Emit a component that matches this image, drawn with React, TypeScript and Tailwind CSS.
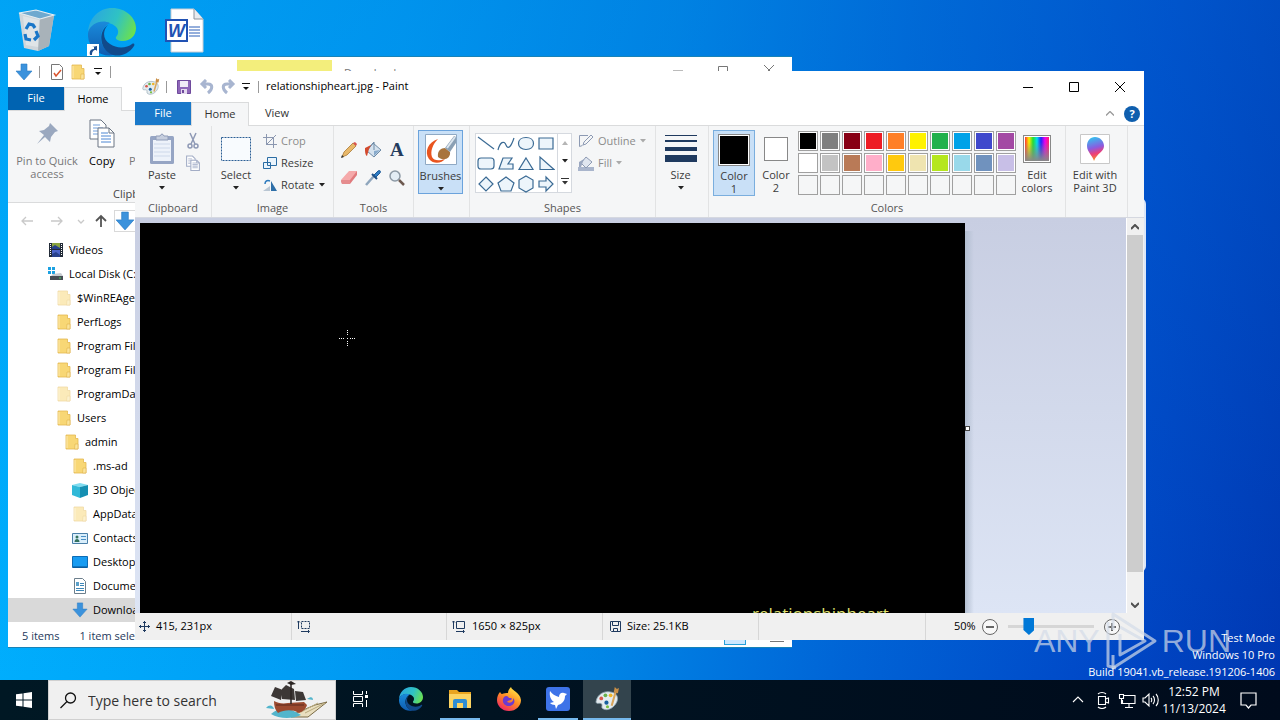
import type { ReactNode } from 'react';
import clsx from 'clsx';

/* ---------- small shared pieces ---------- */

const Caret = ({ color = '#222' }: { color?: string }) => (
    <svg width="6" height="4" viewBox="0 0 6 4" className="shrink-0">
        <path d="M0 0h6L3 3.5z" fill={color} />
    </svg>
);

const QuickMenu = () => (
    <svg width="8" height="8" viewBox="0 0 8 8">
        <path d="M0 .5h8" stroke="#111" />
        <path d="M1 4h6L4 7z" fill="#111" />
    </svg>
);

const DownArrow = ({ size = 18 }: { size?: number }) => (
    <svg width={size} height={size} viewBox="0 0 18 18" className="shrink-0">
        <path d="M6 1h6v7h5l-8 9-8-9h5z" fill="#3b92dc" stroke="#2b7cc4" strokeWidth=".6" />
    </svg>
);

const Folder = ({ faded }: { faded?: boolean }) => (
    <svg width="16" height="16" viewBox="0 0 16 16" opacity={faded ? 0.5 : 1}>
        <path d="M2 1h9.500v3.500H14V15H2z" fill="#f8d775" stroke="#e3b850" strokeWidth=".8" />
        <path d="M11 10h3v5h-3.500z" fill="#fbe49a" stroke="#e0b34a" strokeWidth=".6" />
        <path d="M3 2v12" stroke="#fdeab0" />
    </svg>
);

const Pages = ({ size, muted }: { size: number; muted?: boolean }) => (
    <svg width={size} height={size} viewBox="0 0 30 30" fill="#fff" stroke={muted ? '#a3adc6' : '#6a7583'} strokeWidth={muted ? 2 : 1}>
        <path d="M3 2h11l5 5v14H3z" />
        <path d="M6 7h7M6 10h10M6 13h10M6 16h9" stroke={muted ? '#c3cadc' : '#6f9ddb'} />
        <path d="M11 10h11l5 5v14H11z" />
        <path d="M22 10v5h5" fill="none" />
        <path d="M14 15h7M14 18h10M14 21h10M14 24h10" stroke={muted ? '#b5bed4' : '#4d86d2'} />
    </svg>
);

const Palette = ({ size }: { size: number }) => (
    <svg width={size} height={size} viewBox="0 0 24 24">
        <path d="M1 14C2 7 9 3 16 5c6 1 7 7 4 11-3 5-9 7-12 5-3-1 0-4-2-5s-5 1-5-2z" fill="#e4ebef" stroke="#8ea3ae" strokeWidth=".8" />
        <circle cx="6" cy="11" r="1.800" fill="#d6584a" />
        <circle cx="10" cy="8" r="1.800" fill="#68b14c" />
        <circle cx="15" cy="8" r="1.800" fill="#f0b429" />
        <circle cx="11" cy="15" r="2" fill="#18609e" />
        <circle cx="12" cy="19" r="1.500" fill="#7ac143" />
        <path d="M16 18 20 4" stroke="#d8a55c" strokeWidth="2" />
        <path d="M18 5 19 0l2 2 2-1-1 5z" fill="#c98f47" />
    </svg>
);

const EdgeLogo = ({ size }: { size: number }) => (
    <svg width={size} height={size} viewBox="0 0 48 48">
        <defs>
            <linearGradient id="edgeTop" x1="0" x2="1" y1=".3" y2=".6">
                <stop offset="0" stopColor="#2aa6e0" />
                <stop offset=".55" stopColor="#2fc2c4" />
                <stop offset="1" stopColor="#6be04f" />
            </linearGradient>
            <linearGradient id="edgeLow" x1="0" x2="0" y1="0" y2="1">
                <stop offset="0" stopColor="#1a8bdb" />
                <stop offset="1" stopColor="#0f5cb0" />
            </linearGradient>
        </defs>
        <path d="M0 24C1 10 11 0 24 0c14 0 24 10 24 20 0 8-6 13-13 13-5 0-8-2-7-4 3-3 3-8-1-11C18 11 4 14 0 24z" fill="url(#edgeTop)" />
        <path d="M0 25C2 15 14 11 22 15c-6 3-10 9-9 17 1 7 6 13 14 15C11 50-1 39 0 25z" fill="url(#edgeLow)" />
        <path d="M20 17c-6 6-5 15 2 19 7 5 17 4 22 0 2-1 3 0 2 2-5 8-14 11-21 9C12 43 9 24 20 17z" fill="#114a8b" />
    </svg>
);

/* ---------- desktop ---------- */

function DesktopIcons() {
    return (
        <div className="flex gap-[26px] pl-[13px] pt-2">
            <button aria-label="Recycle Bin" className="w-12 flex justify-center">
                <svg width="42" height="46" viewBox="0 0 42 46">
                    <path d="M3 5 38 7 33 38 22 43 8 40z" fill="#cfd6db" />
                    <path d="M24 11 38 7 33 38 22 43z" fill="#a8b2b9" />
                    <path d="M3 5 20 2l18 5-14 4z" fill="#6fa9cf" stroke="#e8eef2" strokeWidth="1.200" />
                    <path d="m7 8 16 4-1 27-12-2z" fill="#dfe4e7" />
                    <path d="m10 21 3-5 4 1 2 3M20 23l2 5-4 4M15 32l-5-1-1-5" fill="none" stroke="#1976c8" strokeWidth="3.200" />
                </svg>
            </button>
            <button aria-label="Microsoft Edge" className="w-[50px] relative flex justify-center">
                <EdgeLogo size={48} />
                <span className="absolute left-0 bottom-0 bg-white w-3 h-3">
                    <svg width="12" height="12" viewBox="0 0 12 12">
                        <path d="M3 11C2 7 4 5 7 5V3H5l5-1v5L9 6C6 6 5 8 5 11z" fill="#1d4f91" />
                    </svg>
                </span>
            </button>
            <button aria-label="Word document" className="w-11 flex justify-center">
                <svg width="40" height="46" viewBox="0 0 40 46">
                    <path d="M6 1h23l9 10v33H6z" fill="#fff" stroke="#c9cdd3" />
                    <path d="M29 1v10h9" fill="#e8ebef" stroke="#8b939c" />
                    <path d="M24 19h11M24 22h11M24 25h11M24 28h11" stroke="#2b5eb8" />
                    <path d="M1 12h21v21H1z" fill="#fff" stroke="#2152b3" strokeWidth="2" />
                    <text x="3" y="29" fontSize="18" fontWeight="700" fontStyle="italic" fontFamily="Liberation Sans" fill="#2152b3">W</text>
                </svg>
            </button>
        </div>
    );
}

/* ---------- file explorer ---------- */

const VideosIcon = () => (
    <svg width="16" height="16" viewBox="0 0 16 16">
        <path d="M1 1h14v14H1z" fill="#222b38" />
        <path d="M4 1h8v6H4z" fill="#8aa33f" />
        <path d="M4 8h8v7H4z" fill="#4a63c8" />
        <path d="m4 5 3-2 5 3v1H4zM4 12l4-2 4 3v2H4z" fill="#27408b" />
        <path d="M2.500 2v12M13.500 2v12" stroke="#fff" strokeDasharray="1 1" />
    </svg>
);
const DiskIcon = () => (
    <svg width="16" height="16" viewBox="0 0 16 16">
        <path d="M0 1h3v3H0zM4 1h3v3H4zM0 5h3v3H0zM4 5h3v3H4z" fill="#1ba1e2" />
        <path d="m5 8 8-1 2 3H3z" fill="#c6cbd0" />
        <path d="M2 10h13v4H2z" fill="#474d54" />
        <path d="M11 12h2" stroke="#46d35a" />
    </svg>
);
const CubeIcon = () => (
    <svg width="16" height="16" viewBox="0 0 16 16">
        <path d="m0 3 8-2 8 2-8 2z" fill="#7fdcf0" />
        <path d="m0 3 8 2v11l-8-3z" fill="#31b9d8" />
        <path d="m16 3-8 2v11l8-3z" fill="#158fb2" />
    </svg>
);
const ContactIcon = () => (
    <svg width="16" height="16" viewBox="0 0 16 16">
        <path d="M.5 3.500h15v10H.5z" fill="#d9eefb" stroke="#4a7fa8" />
        <circle cx="5" cy="7" r="1.500" fill="#33715e" />
        <path d="M2.500 12c0-4 5-4 5 0z" fill="#33715e" />
        <path d="M9 6.500h5M9 9.500h5" stroke="#4a8fc4" />
    </svg>
);
const DesktopIcon = () => (
    <svg width="16" height="16" viewBox="0 0 16 16">
        <path d="M.5 2.500h15v11H.5z" fill="#189cf2" stroke="#0d6cb5" />
        <path d="M1 13h14" stroke="#0a4f8a" />
    </svg>
);
const DocIcon = () => (
    <svg width="16" height="16" viewBox="0 0 16 16">
        <path d="M2.500.5h8l3 3v12h-11z" fill="#fff" stroke="#6c7f8c" />
        <path d="M8 5.500h4M8 7.500h4M4 10.500h8M4 12.500h8" stroke="#3d87b8" />
        <path d="M4 4h3v4H4z" fill="#5aa0c9" />
    </svg>
);

const tree: { name: string; pad: string; icon: ReactNode; selected?: boolean }[] = [
    { name: 'Videos', pad: 'pl-10', icon: <VideosIcon /> },
    { name: 'Local Disk (C:)', pad: 'pl-10', icon: <DiskIcon /> },
    { name: '$WinREAgent', pad: 'pl-12', icon: <Folder faded /> },
    { name: 'PerfLogs', pad: 'pl-12', icon: <Folder /> },
    { name: 'Program Files', pad: 'pl-12', icon: <Folder /> },
    { name: 'Program Files (x86)', pad: 'pl-12', icon: <Folder /> },
    { name: 'ProgramData', pad: 'pl-12', icon: <Folder faded /> },
    { name: 'Users', pad: 'pl-12', icon: <Folder /> },
    { name: 'admin', pad: 'pl-14', icon: <Folder /> },
    { name: '.ms-ad', pad: 'pl-16', icon: <Folder /> },
    { name: '3D Objects', pad: 'pl-16', icon: <CubeIcon /> },
    { name: 'AppData', pad: 'pl-16', icon: <Folder faded /> },
    { name: 'Contacts', pad: 'pl-16', icon: <ContactIcon /> },
    { name: 'Desktop', pad: 'pl-16', icon: <DesktopIcon /> },
    { name: 'Documents', pad: 'pl-16', icon: <DocIcon /> },
    { name: 'Downloads', pad: 'pl-16', icon: <DownArrow size={16} />, selected: true },
];

function Explorer() {
    return (
        <section
            aria-label="Downloads"
            className="absolute left-2 top-14 right-[488px] bottom-8 bg-white border-t border-b border-[#1883b7] flex flex-col overflow-hidden text-[11px]"
        >
            <header className="h-[30px] shrink-0 flex">
                <div className="flex items-center pl-[7px] w-[229px]">
                    <DownArrow />
                    <span className="w-px h-3 bg-[#999] ml-[6px]" />
                    <span className="flex items-center gap-[6px] pl-[10px] pr-2">
                        <svg width="14" height="16" viewBox="0 0 14 16">
                            <path d="M1.500.5h8l3 3v12h-11z" fill="#fff" stroke="#777" />
                            <path d="m4 9 2 3 5-6" fill="none" stroke="#d9532c" strokeWidth="1.500" />
                        </svg>
                        <Folder />
                    </span>
                    <QuickMenu />
                    <span className="w-px h-3 bg-[#999] ml-2" />
                </div>
                <div className="w-[95px] mt-[3px] pt-[7px] bg-[#f3ee7c] text-center leading-4">Manage</div>
                <div className="pl-3 pt-2 leading-4 text-[#777] grow">Downloads</div>
                <svg width="124" height="28" viewBox="0 0 124 28" fill="none" stroke="#777">
                    <path d="M5 14h10M50.500 9.500h9v9h-9zM96 8l10 10M106 8 96 18" />
                </svg>
            </header>
            <nav className="h-6 shrink-0 flex border-b border-[#dadbdc]">
                <button className="w-14 bg-[#0063b1] text-white">File</button>
                <button className="w-[58px] h-6 bg-[#f5f6f7] border-x border-t border-[#dadbdc]">Home</button>
            </nav>
            <div className="h-[92px] shrink-0 bg-[#f5f6f7] border-b border-[#dadbdc] flex flex-col">
                <div className="flex h-[76px] pt-[7px] leading-[13px]">
                    <button className="w-[78px] flex flex-col items-center text-[#777] gap-1">
                        <svg width="30" height="32" viewBox="0 0 30 32">
                            <path d="m18 5 8 8-3 1-4 5-1 5-5-5-8 7 7-9-5-4 5-1 5-4z" fill="#9aa8bf" />
                        </svg>
                        <span className="w-[70px]">Pin to Quick access</span>
                    </button>
                    <button className="w-8 flex flex-col items-center gap-1">
                        <span className="h-8"><Pages size={30} /></span>
                        Copy
                    </button>
                    <button className="w-[50px] pt-9 flex flex-col items-center text-[#777]">Paste</button>
                </div>
                <p className="pl-[105px] leading-[13px] text-[#444]">Clipboard</p>
            </div>
            <div className="h-[35px] shrink-0 flex items-center pl-3">
                <svg width="92" height="20" viewBox="0 0 92 20" fill="none" stroke="#c9c9c9" strokeWidth="1.300" className="shrink-0">
                    <path d="M2 10h11M6 6l-4 4 4 4M31 10h11M38 6l4 4-4 4M58 9l3 3 3-3" />
                    <path d="M81 16V5M76 10l5-5 5 5" stroke="#555" strokeWidth="1.800" />
                </svg>
                <span className="ml-[2px] grow border border-[#d9d9d9] h-[22px] flex items-center"><DownArrow size={20} /></span>
            </div>
            <ul className="grow min-h-0 overflow-hidden">
                {tree.map((item) => (
                    <li key={item.name}>
                        <button
                            className={clsx('h-6 w-full flex items-center gap-[5px] whitespace-nowrap', item.pad, item.selected && 'bg-[#d9d9d9]')}
                        >
                            {item.icon}
                            {item.name}
                        </button>
                    </li>
                ))}
            </ul>
            <footer className="h-[25px] shrink-0 flex items-center pt-[3px] pl-[14px] gap-5 text-[#1e395b]">
                <span>5 items</span>
                <span>1 item selected&nbsp; 25.1 KB</span>
                <span className="ml-auto mr-1 w-[22px] h-[18px] bg-[#cce8ff] border border-[#26a0da]" />
                <span className="mr-2 w-[14px] h-3 border-y border-[#777]" />
            </footer>
        </section>
    );
}

/* ---------- paint ribbon ---------- */

function Group({ label, className, children }: { label?: string; className: string; children: ReactNode }) {
    return (
        <section className={clsx('shrink-0 pt-1 border-r border-[#e2e3e4] flex flex-col', className)}>
            <div className="h-[70px] flex">{children}</div>
            <h2 className="h-4 leading-4 text-center text-[#555]">{label}</h2>
        </section>
    );
}

function BigButton({ label, icon, className, caret = true }: { label: string; icon: ReactNode; className: string; caret?: boolean }) {
    return (
        <button className={clsx('flex flex-col items-center leading-[13px]', className)}>
            <span className="h-[38px] flex items-center justify-center">{icon}</span>
            <span>{label}</span>
            {caret && <span className="pt-[5px]"><Caret /></span>}
        </button>
    );
}

function SmallButton({ label, icon, muted, caret }: { label: string; icon: ReactNode; muted?: boolean; caret?: boolean }) {
    return (
        <button className={clsx('h-[22px] flex items-center gap-1', muted && 'text-[#8b8b8b]')}>
            {icon}
            {label}
            {caret && <Caret color={muted ? '#aaa' : '#222'} />}
        </button>
    );
}

const shapes = [
    'M1 2 17 14',
    'M1 15C3 7 7 5 9 10s5 2 8-7',
    'M9 2.500c4.500 0 7.500 2.500 7.500 6s-3 6-7.500 6-7.500-2.500-7.500-6 3-6 7.500-6z',
    'M2 3h14v11H2z',
    'M4 3h10q3 0 3 3v5q0 3-3 3H4q-3 0-3-3V6q0-3 3-3z',
    'M2 14 6 3h9l-4 6h5v5z',
    'M9 3l7 11.500H2z',
    'M3 2v12.500h14z',
    'M9 2l7 7-7 7-7-7z',
    'M9 2l8 6-3 8H4L1 8z',
    'M9 1l7 4v8l-7 4-7-4V5z',
    'M2 6h7V2l7 7-7 7v-4H2z',
];

const tools: { name: string; icon: ReactNode }[] = [
    {
        name: 'Pencil',
        icon: (
            <>
                <path d="m2 16 2-5L13 2l3 3-9 9z" fill="#e8b86a" stroke="#a97a35" strokeWidth=".8" />
                <path d="m13 2 2-1 2 2-1 2z" fill="#d9534f" />
                <path d="m1 17 1-3 2 2z" fill="#333" />
            </>
        ),
    },
    {
        name: 'Fill with color',
        icon: (
            <>
                <path d="m9 2 8 7-7 7-7-6z" fill="#d5e2ee" stroke="#6f8ba6" />
                <path d="m6 6 4-5v8" fill="none" stroke="#6f8ba6" />
                <path d="m1 7 6-3-2 4-2 7C1 14 1 10 1 7z" fill="#d34a2d" />
                <path d="m10 10 6-1-6 6z" fill="#88aacb" />
            </>
        ),
    },
    {
        name: 'Text',
        icon: <text x="2" y="15" fontSize="19" fontWeight="700" fontFamily="Liberation Serif" fill="#243c5e">A</text>,
    },
    {
        name: 'Eraser',
        icon: (
            <>
                <path d="m1 12 8-9 8-1v4l-7 9H2z" fill="#e07a7d" />
                <path d="m1 11 8-9h8l-7 9z" fill="#f5a9aa" />
                <path d="M1 11h9v4H2z" fill="#e58c8e" />
            </>
        ),
    },
    {
        name: 'Color picker',
        icon: (
            <>
                <path d="m2 16 8-9" stroke="#8fa6bd" strokeWidth="2.500" />
                <path d="m8 5 5 5" stroke="#1d4f86" strokeWidth="2" />
                <path d="m10 6 4-4c2-1 3 0 2 2l-4 4z" fill="#2f7cc4" stroke="#1d5a97" />
            </>
        ),
    },
    {
        name: 'Magnifier',
        icon: (
            <>
                <circle cx="7" cy="7" r="5" fill="#e3edf5" stroke="#8c99a5" strokeWidth="1.500" />
                <path d="m11 11 5 5" stroke="#6d5a50" strokeWidth="2.500" />
            </>
        ),
    },
];

const palette = [
    '#000000', '#7f7f7f', '#880015', '#ed1c24', '#ff7f27', '#fff200', '#22b14c', '#00a2e8', '#3f48cc', '#a349a4',
    '#ffffff', '#c3c3c3', '#b97a57', '#ffaec9', '#ffc90e', '#efe4b0', '#b5e61d', '#99d9ea', '#7092be', '#c8bfe7',
    '', '', '', '', '', '', '', '', '', '',
];

function Ribbon() {
    return (
        <div className="h-[92px] shrink-0 flex bg-[#f5f6f7] border-b border-[#d5d8e0] text-[#3b3b3b]">
            <Group label="Clipboard" className="w-[77px]">
                <BigButton
                    label="Paste"
                    className="w-[46px] ml-1"
                    icon={
                        <svg width="26" height="32" viewBox="0 0 26 32">
                            <rect x="1" y="3" width="24" height="28" rx="1.500" fill="#96a5c4" />
                            <path d="M4 7h18v21H4z" fill="#edf2fa" />
                            <path d="M5 11h16M5 15h16M5 19h16M5 23h16" stroke="#cdd8ea" />
                            <path d="M7 3h4q2-4 4 0h4v4H7z" fill="#c6cede" stroke="#8f9cb8" />
                        </svg>
                    }
                />
                <div className="flex flex-col">
                    <button aria-label="Cut" className="h-[22px] w-4">
                        <svg width="16" height="18" viewBox="0 0 16 18" fill="none" stroke="#8e99b5" strokeWidth="1.500">
                            <path d="m5 1 5 11M11 1 6 12" />
                            <circle cx="5" cy="14" r="2" />
                            <circle cx="11" cy="14" r="2" />
                        </svg>
                    </button>
                    <button aria-label="Copy" className="h-[22px] w-4"><Pages size={16} muted /></button>
                </div>
            </Group>
            <Group label="Image" className="w-[122px]">
                <BigButton
                    label="Select"
                    className="w-12"
                    icon={
                        <svg width="32" height="26" viewBox="0 0 32 26">
                            <path d="M1.500 1.500h29v23h-29z" fill="#f8fbfe" stroke="#2b5f94" strokeDasharray="2 1" />
                        </svg>
                    }
                />
                <div className="flex flex-col pl-[3px]">
                    <SmallButton
                        muted
                        label="Crop"
                        icon={
                            <svg width="14" height="14" viewBox="0 0 14 14" fill="none" stroke="#8b97b0">
                                <path d="M3.500 0v10.500H14M0 3.500h10.500V14M3 11l10-10" />
                            </svg>
                        }
                    />
                    <SmallButton
                        label="Resize"
                        icon={
                            <svg width="14" height="14" viewBox="0 0 14 14" fill="#eaf4fc" stroke="#2b6ca3">
                                <path d="M.5 6.500h7v6h-7zM4.500 1.500h9v8h-9z" />
                            </svg>
                        }
                    />
                    <SmallButton
                        caret
                        label="Rotate"
                        icon={
                            <svg width="14" height="14" viewBox="0 0 14 14">
                                <path d="M0 13h7V8z" fill="#b9c6d3" />
                                <path d="M8 3v10h6z" fill="#2e6fa8" />
                                <path d="M2 6c0-3 2-4 5-3" fill="none" stroke="#2b79bd" strokeWidth="1.500" />
                            </svg>
                        }
                    />
                </div>
            </Group>
            <Group label="Tools" className="w-20">
                <div className="grid grid-cols-[repeat(3,24px)] auto-rows-[28px] pt-[6px] pl-[3px] content-start">
                    {tools.map((tool) => (
                        <button key={tool.name} aria-label={tool.name} className="flex items-center justify-center">
                            <svg width="18" height="18" viewBox="0 0 18 18">{tool.icon}</svg>
                        </button>
                    ))}
                </div>
            </Group>
            <Group className="w-14">
                <BigButton
                    label="Brushes"
                    className="w-[45px] h-16 ml-1 bg-[#c9e0f7] border border-[#6ba3dc]"
                    icon={
                        <svg width="34" height="34" viewBox="0 0 34 34">
                            <path d="M1.500 1.500h31v30h-31z" fill="#fff" stroke="#8fa9c4" />
                            <path d="M14 6C4 9 0 19 5 26c5 6 13 4 16 0-6 2-11 2-13-2-2-6 1-13 6-18z" fill="#e9541f" />
                            <path d="M14 24c-1-6 3-9 7-9l5 4c1 6-6 10-12 5z" fill="#a8743d" />
                            <path d="m21 15 9-12 2 1v6l-6 9z" fill="#8aa0b5" />
                            <path d="m23 15 8-11" stroke="#dce6ef" strokeWidth="2" />
                        </svg>
                    }
                />
            </Group>
            <Group label="Shapes" className="w-[186px]">
                <div className="ml-[5px] mt-[3px] h-[60px] w-[97px] flex border border-[#d5d9df] bg-white">
                    <div className="grid grid-cols-[repeat(4,20px)] auto-rows-[20px] w-[81px]">
                        {shapes.map((d) => (
                            <button key={d} aria-label="Shape" className="flex items-center justify-center">
                                <svg width="18" height="18" viewBox="0 0 18 18">
                                    <path d={d} fill={d === shapes[0] || d === shapes[1] ? 'none' : '#edf5fb'} stroke="#3a6a94" strokeWidth="1.200" />
                                </svg>
                            </button>
                        ))}
                    </div>
                    <div className="w-[14px] border-l border-[#d5d9df] flex flex-col items-center justify-around">
                        <svg width="6" height="4" viewBox="0 0 6 4"><path d="M0 4h6L3 0z" fill="#b5b5b5" /></svg>
                        <Caret />
                        <svg width="8" height="7" viewBox="0 0 8 7"><path d="M0 .5h8" stroke="#333" /><path d="M1 3h6L4 6.500z" fill="#333" /></svg>
                    </div>
                </div>
                <div className="flex flex-col pl-[6px]">
                    <SmallButton
                        muted
                        caret
                        label="Outline"
                        icon={
                            <svg width="16" height="16" viewBox="0 0 16 16" fill="none" stroke="#8d9ab3">
                                <path d="M10 2.500H1.500v11l3-1M5 12l1-3 7-7 2 2-7 7z" />
                            </svg>
                        }
                    />
                    <SmallButton
                        muted
                        caret
                        label="Fill"
                        icon={
                            <svg width="16" height="16" viewBox="0 0 16 16">
                                <path d="M0 12h16v4H0z" fill="#a9b5cc" />
                                <path d="m8 2 6 5-6 6-5-5z" fill="#dfe5ef" stroke="#8d9ab3" />
                                <path d="m1 7 5-3-3 8H1z" fill="#9aa7c0" />
                            </svg>
                        }
                    />
                </div>
            </Group>
            <Group className="w-[53px]">
                <BigButton
                    label="Size"
                    className="w-[49px]"
                    icon={
                        <svg width="32" height="28" viewBox="0 0 32 28" fill="#1f3a5f">
                            <path d="M0 0h32v1H0zM0 5h32v2H0zM0 12h32v4H0zM0 20h32v7H0z" />
                        </svg>
                    }
                />
            </Group>
            <Group label="Colors" className="w-[357px]">
                <BigButton
                    caret={false}
                    label="Color 1"
                    className="w-[42px] h-[66px] ml-1 px-1 bg-[#c9e0f7] border border-[#7aaede]"
                    icon={<span className="w-8 h-8 border border-[#888] bg-white p-px flex"><span className="grow bg-black" /></span>}
                />
                <BigButton
                    caret={false}
                    label="Color 2"
                    className="w-[42px] px-1"
                    icon={<span className="w-6 h-6 bg-white border border-[#888]" />}
                />
                <div className="pt-px pl-px">
                    <div className="grid grid-cols-[repeat(10,20px)] auto-rows-[20px] gap-[2px]">
                        {palette.map((color, i) => (
                            <button
                                key={i}
                                aria-label={color || 'Empty color'}
                                className={clsx('border border-[#a0a0a0] p-px flex', color ? 'bg-white' : 'bg-[#f5f6f7]')}
                            >
                                <span className="grow h-full" style={{ backgroundColor: color || undefined }} />
                            </button>
                        ))}
                    </div>
                </div>
                <BigButton
                    caret={false}
                    label="Edit colors"
                    className="w-[42px] px-1"
                    icon={
                        <span className="w-7 h-7 border border-[#888] p-px bg-white flex">
                            <span className="grow bg-[linear-gradient(to_top,#888_0%,transparent_80%),linear-gradient(to_right,#f33,#fe0,#2d3,#0de,#22f,#e0e,#f26)]" />
                        </span>
                    }
                />
            </Group>
            <Group className="w-[62px]">
                <BigButton
                    caret={false}
                    label="Edit with Paint 3D"
                    className="w-[58px]"
                    icon={
                        <svg width="30" height="30" viewBox="0 0 30 30">
                            <defs>
                                <linearGradient id="pin3d" x1=".3" x2=".5" y1="0" y2="1">
                                    <stop offset="0" stopColor="#31c4f0" />
                                    <stop offset=".45" stopColor="#8a5ce0" />
                                    <stop offset=".7" stopColor="#ee3e77" />
                                    <stop offset="1" stopColor="#f79a1f" />
                                </linearGradient>
                            </defs>
                            <path d="M.5.5h29v29H.5z" fill="#fff" stroke="#c8c8c8" />
                            <path d="M15 3c5 0 9 4 9 9 0 6-7 7-10 15-1-5-7-9-7-15 0-5 3-9 8-9z" fill="url(#pin3d)" />
                        </svg>
                    }
                />
            </Group>
        </div>
    );
}

/* ---------- paint window ---------- */

function Paint() {
    return (
        <section
            aria-label="relationshipheart.jpg - Paint"
            className="absolute left-[135px] right-[136px] top-[71px] bottom-10 bg-white flex flex-col overflow-hidden text-[11px]"
        >
            <header className="h-[31px] shrink-0 flex items-center pl-[7px]">
                <Palette size={18} />
                <span className="w-px h-3 bg-[#999] ml-[6px]" />
                <svg width="14" height="14" viewBox="0 0 14 14" className="ml-[10px]">
                    <path d="M.5.5h13v13H.5z" fill="#8e66b8" stroke="#6f4a9c" />
                    <path d="M3 1h8v6H3z" fill="#f0eaf6" />
                    <path d="M4 9h6v5H4z" fill="#e3d9ee" />
                    <path d="M5 10h2v3H5z" fill="#6f4a9c" />
                </svg>
                <svg width="38" height="16" viewBox="0 0 38 16" fill="none" stroke="#a8b5d0" strokeWidth="3" className="ml-2">
                    <path d="M4 5h5c5 0 5 5 0 9M7 1 3 5l4 4M33 5h-5c-5 0-5 5 0 9M30 1l4 4-4 4" />
                </svg>
                <span className="pl-[5px]"><QuickMenu /></span>
                <span className="w-px h-3 bg-[#999] ml-2" />
                <h1 className="pl-[7px] text-black grow">relationshipheart.jpg - Paint</h1>
                <button aria-label="Minimize" className="w-[46px] flex justify-center">
                    <svg width="10" height="10" viewBox="0 0 10 10"><path d="M0 5.500h10" stroke="#000" /></svg>
                </button>
                <button aria-label="Maximize" className="w-[46px] flex justify-center">
                    <svg width="10" height="10" viewBox="0 0 10 10"><path d="M.5.5h9v9h-9z" fill="none" stroke="#000" /></svg>
                </button>
                <button aria-label="Close" className="w-[46px] flex justify-center mr-px">
                    <svg width="10" height="10" viewBox="0 0 10 10"><path d="m0 0 10 10M10 0 0 10" stroke="#000" /></svg>
                </button>
            </header>
            <nav className="h-6 shrink-0 flex items-stretch border-b border-[#dadbdc] text-[#333]">
                <button className="w-14 bg-[#1979ca] text-white">File</button>
                <button className="w-[58px] h-6 bg-[#f5f6f7] border-x border-t border-[#dadbdc]">Home</button>
                <button className="w-14">View</button>
                <button aria-label="Collapse ribbon" className="ml-auto w-4 flex items-center justify-center">
                    <svg width="8" height="5" viewBox="0 0 8 5"><path d="m0 4.500 4-4 4 4" fill="none" stroke="#999" strokeWidth="1.300" /></svg>
                </button>
                <button aria-label="Help" className="self-center ml-[6px] mr-1 w-4 h-4 rounded-full bg-[#0f5fae] text-white font-bold leading-4">?</button>
            </nav>
            <Ribbon />
            <div className="grow min-h-0 flex bg-linear-to-b from-[#c8cee2] to-[#dde5f5]">
                <div className="grow min-w-0 flex pl-[5px] pt-[5px] overflow-hidden">
                    <div className="relative w-[825px] shrink-0 bg-black overflow-hidden">
                        <svg width="17" height="17" viewBox="0 0 17 17" className="absolute left-[199px] top-[107px]" stroke="#fff">
                            <path d="M8.500 0v6M8.500 11v6M0 8.500h6M11 8.500h6" strokeDasharray="1 1" />
                            <path d="M8 8.500h1" />
                        </svg>
                        <p className="absolute left-[612px] -bottom-[13px] text-[17px] leading-6 text-[#dfe070] whitespace-nowrap">relationshipheart</p>
                    </div>
                    <div className="relative w-[9px] mt-2 bg-linear-to-r from-[#b3bfd1] to-transparent">
                        <span className="absolute left-0 top-[51%] w-[5px] h-[5px] bg-white border border-[#444]" />
                    </div>
                </div>
                <div className="w-[18px] shrink-0 bg-[#f0f0f0] border-l border-white flex flex-col pr-px">
                    <button aria-label="Scroll up" className="h-[17px] flex items-center justify-center">
                        <svg width="8" height="6" viewBox="0 0 8 6"><path d="m0 5 4-4 4 4" fill="none" stroke="#505050" strokeWidth="2" /></svg>
                    </button>
                    <span className="flex-[14] bg-[#cdcdcd]" />
                    <span className="flex-1" />
                    <button aria-label="Scroll down" className="h-[17px] flex items-center justify-center">
                        <svg width="8" height="6" viewBox="0 0 8 6"><path d="m0 1 4 4 4-4" fill="none" stroke="#505050" strokeWidth="2" /></svg>
                    </button>
                </div>
            </div>
            <footer className="h-[27px] shrink-0 flex items-center bg-[#f0f0f0] text-black [&>div]:h-full [&>div]:flex [&>div]:items-center [&>div]:gap-[6px]">
                <div className="w-[157px] pl-1 border-r border-[#d7d7d7]">
                    <svg width="11" height="11" viewBox="0 0 11 11" fill="none" stroke="#1f3a5f"><path d="M5.500 0v11M0 5.500h11M4 2l1.500-1.500L7 2M4 9l1.500 1.500L7 9M2 4 .5 5.500 2 7M9 4l1.500 1.500L9 7" /></svg>
                    415, 231px
                </div>
                <div className="w-[155px] pl-[5px] border-r border-[#d7d7d7]">
                    <svg width="14" height="13" viewBox="0 0 14 13" fill="none" stroke="#1f3a5f"><path d="M4.500 1.500h8v7h-8z" strokeDasharray="2 1" /><path d="M1.500 9V1M0 2.500 1.500 1 3 2.500M4 11.500h8M11 10l1.500 1.500L11 13" /></svg>
                </div>
                <div className="w-[156px] pl-[5px] border-r border-[#d7d7d7]">
                    <svg width="14" height="13" viewBox="0 0 14 13" fill="none" stroke="#1f3a5f"><path d="M4.500 1.500h8v7h-8zM1.500 9V1M0 2.500 1.500 1 3 2.500M4 11.500h8M11 10l1.500 1.500L11 13" /></svg>
                    1650 × 825px
                </div>
                <div className="w-[156px] pl-[7px] border-r border-[#d7d7d7]">
                    <svg width="11" height="11" viewBox="0 0 11 11" fill="none" stroke="#1f3a5f"><path d="M.5.5h10v10H1.500l-1-1zM2.500.5v4h6v-4M3.500 10V7.500h4V10" /></svg>
                    Size: 25.1KB
                </div>
                <div className="grow" />
                <div className="w-[219px] pl-7 border-l border-[#d7d7d7]">
                    <span>50%</span>
                    <button aria-label="Zoom out">
                        <svg width="16" height="16" viewBox="0 0 16 16" fill="#f8f8f8" stroke="#666"><circle cx="8" cy="8" r="7.500" /><path d="M4 8h8" strokeWidth="2" /></svg>
                    </button>
                    <input
                        type="range"
                        aria-label="Zoom"
                        defaultValue={21}
                        className="appearance-none w-[86px] h-[3px] mx-1 bg-[#d6d6d6] [&::-webkit-slider-thumb]:appearance-none [&::-webkit-slider-thumb]:w-[11px] [&::-webkit-slider-thumb]:h-[17px] [&::-webkit-slider-thumb]:bg-[#0078d7] [&::-webkit-slider-thumb]:[clip-path:polygon(0_0,100%_0,100%_70%,50%_100%,0_70%)]"
                    />
                    <button aria-label="Zoom in">
                        <svg width="16" height="16" viewBox="0 0 16 16" fill="#f8f8f8" stroke="#666"><circle cx="8" cy="8" r="7.500" /><path d="M4 8h8M8 4v8" strokeWidth="2" /></svg>
                    </button>
                </div>
            </footer>
        </section>
    );
}

function Watermark() {
    return (
        <div className="absolute right-[49px] bottom-2 h-[62px] flex items-center text-[#d3dbe8]/70 font-['Liberation_Sans',sans-serif] text-[32px] leading-10">
            <span>ANY</span>
            <svg width="62" height="62" viewBox="0 0 62 62" fill="none" stroke="#d3dbe8" strokeOpacity=".7" strokeWidth="3" strokeLinejoin="round">
                <path d="M13 20V4l42 27-42 27V45" />
                <path d="M8 12v44l8 2M20 24v21l25-14-25-14" />
            </svg>
            <span>RUN</span>
        </div>
    );
}

/* ---------- taskbar ---------- */

function TaskButton({ name, className, children }: { name: string; className?: string; children: ReactNode }) {
    return (
        <button aria-label={name} className="w-12 h-full flex items-center justify-center">
            <span className={clsx('h-full flex items-center justify-center border-b-2', className ?? 'w-10 border-transparent')}>{children}</span>
        </button>
    );
}

function Taskbar() {
    return (
        <footer className="h-10 shrink-0 bg-[#00121d] bg-linear-to-r from-[#001824] to-[#000b1c] flex items-center text-white">
            <button aria-label="Start" className="w-12 h-full flex items-center justify-center">
                <svg width="16" height="16" viewBox="0 0 16 16" fill="#fff"><path d="M0 2.300 6.500 1.400v6.100H0zM7.500 1.200 16 0v7.500H7.500zM0 8.500h6.500v6.100L0 13.700zM7.500 8.500H16V16l-8.500-1.200z" /></svg>
            </button>
            <label className="w-72 h-full bg-[#f0f0f0] border border-[#d0d0d0] flex items-center pl-[11px] text-[#222]">
                <svg width="17" height="17" viewBox="0 0 17 17" fill="none" stroke="#111" strokeWidth="1.300" className="shrink-0"><circle cx="10.500" cy="6" r="5" /><path d="m7 9.500-6.500 6.500" /></svg>
                <input aria-label="Search" placeholder="Type here to search" className="w-[178px] pl-[11px] text-[14px] bg-transparent outline-none placeholder:text-[#333]" />
                <svg width="66" height="38" viewBox="0 0 66 38" className="ml-2 shrink-0">
                    <path d="m28 34 24-10 12-3-19 15H28z" fill="#e9dfc0" stroke="#7a6a45" />
                    <path d="m42 32 20-10M38 31l17-9" stroke="#b8aa7e" />
                    <path d="M3 27c3-4 7-3 8 1M44 18c4-3 6-2 6 1M8 33c8-7 18-7 30 1-8 4-22 4-30-1z" fill="#53b5cc" />
                    <path d="M11 20c4 2 8 3 14 2l16-1 3 3c-1 4-5 7-8 8-7-4-15-3-21 0-3-3-4-7-4-12z" fill="#9c4a2f" />
                    <path d="M13 24h28" stroke="#5c2a1e" />
                    <path d="m8 15 4-9 8 3-2 10zM19 8l4-4 8 4 1 11-13-1zM32 10l8 1 3 8-10 1z" fill="#3d3836" />
                    <path d="M28 2v21" stroke="#2b2523" strokeWidth="1.500" />
                    <path d="m24 2 4-2 5 3-5 1z" fill="#2b2523" />
                </svg>
            </label>
            <TaskButton name="Task View">
                <svg width="17" height="16" viewBox="0 0 17 16" fill="none" stroke="#fff"><path d="M1.500 0v3.500h9V0M1.500 5.500h9v5h-9zM1.500 16v-3.500h9V16M14.500 0v3M14.500 9v7" /><path d="M13 4h3v3h-3z" fill="#fff" stroke="none" /></svg>
            </TaskButton>
            <div className="h-full flex gap-px pl-[3px]">
                <TaskButton name="Edge"><EdgeLogo size={24} /></TaskButton>
                <TaskButton name="File Explorer" className="w-10 border-[#76b9ed]">
                    <svg width="22" height="20" viewBox="0 0 22 20"><path d="M0 1h8l2 2h12v16H0z" fill="#e9a520" /><path d="M0 5h22v14H0z" fill="#fcd462" /><path d="M4 19v-7q0-2 2-2h10q2 0 2 2v7h-4v-5H8v5z" fill="#2f8dd2" /></svg>
                </TaskButton>
                <TaskButton name="Firefox">
                    <svg width="24" height="24" viewBox="0 0 24 24">
                        <defs><linearGradient id="fox" x1=".8" x2=".2" y1="0" y2="1"><stop offset="0" stopColor="#fff04a" /><stop offset=".5" stopColor="#ff8a24" /><stop offset="1" stopColor="#ee1f6a" /></linearGradient></defs>
                        <path d="M3 5c1 1 1 2 2 2 2-1 4-1 6-1 0-2 1-4 3-6 1 4 9 5 10 13 0 6-5 11-12 11S0 19 0 13c0-3 1-6 3-8z" fill="url(#fox)" />
                        <path d="M7 10c2-2 4-1 5 1 2 0 3 0 3 1-1 2-4 1-5 3 3 2 7 0 6-4 3 3 1 8-4 8s-8-5-5-9z" fill="#6d3ad0" />
                    </svg>
                </TaskButton>
                <TaskButton name="Bird app" className="w-10 border-[#76b9ed]">
                    <svg width="24" height="24" viewBox="0 0 24 24"><rect width="24" height="24" rx="3" fill="#3e73e8" /><path d="M4 4c2 3 5 5 9 6 0-3 2-5 5-4l3 1-2 2c0 5-3 8-7 9l-2 4-1-4c-2 0-4-1-5-2l4-1c-3-2-5-6-4-11z" fill="#fff" /></svg>
                </TaskButton>
                <TaskButton name="Paint" className="w-12 bg-[#33444d] border-[#76b9ed]"><Palette size={25} /></TaskButton>
            </div>
            <div className="ml-auto flex items-center h-full">
                <svg width="88" height="18" viewBox="0 0 88 18" fill="none" stroke="#fff" strokeWidth="1.100">
                    <path d="m1 11 5-5 5 5" />
                    <path d="M26.500 5.500h7v8h-7zM33.500 8l3-1v5l-3-1M26 3c2-2 6-2 8 0M26 16c2 2 6 2 8 0" />
                    <path d="M52 4.500h11v8H50.500V9M57 13v3M53 16.500h8M47.500 3.500h4v4h-4zM49.500 8v5" />
                    <path d="M71 7h2l4-4v12l-4-4h-2zM79 7c1 1 1 3 0 4M81 5c2 2 2 6 0 8M84 3c3 3 3 9 0 12" />
                </svg>
                <div className="w-[68px] text-[12px] leading-[17px] text-center">
                    <p>12:52 PM</p>
                    <p>11/13/2024</p>
                </div>
                <button aria-label="Notifications" className="w-10 flex justify-center mr-3">
                    <svg width="17" height="17" viewBox="0 0 17 17" fill="none" stroke="#fff" strokeWidth="1.200"><path d="M1 1h15v12h-5l-2.500 3L6 13H1z" /></svg>
                </button>
            </div>
        </footer>
    );
}

export default function App() {
    return (
        <div className="h-screen flex flex-col overflow-hidden font-['Open_Sans','Noto_Sans',sans-serif] text-black">
            <main className="relative grow min-h-0 bg-[linear-gradient(to_bottom,#0078d740,transparent),linear-gradient(97deg,#00b2ff_0%,#009cf4_30%,#0085e6_50%,#0064d6_68%,#0049c8_86%,#0037b2_100%)]">
                <DesktopIcons />
                <Explorer />
                {/* edge of a window hidden behind Paint */}
                <div className="absolute right-[134px] w-6 top-[198px] bottom-[108px] rounded-md bg-[#dbe6f7]" />
                <Paint />
                <Watermark />
                <div className="absolute right-[5px] bottom-0 text-right text-[11px] leading-[17px] text-white">
                    <p>Test Mode</p>
                    <p>Windows 10 Pro</p>
                    <p>Build 19041.vb_release.191206-1406</p>
                </div>
            </main>
            <Taskbar />
        </div>
    );
}
